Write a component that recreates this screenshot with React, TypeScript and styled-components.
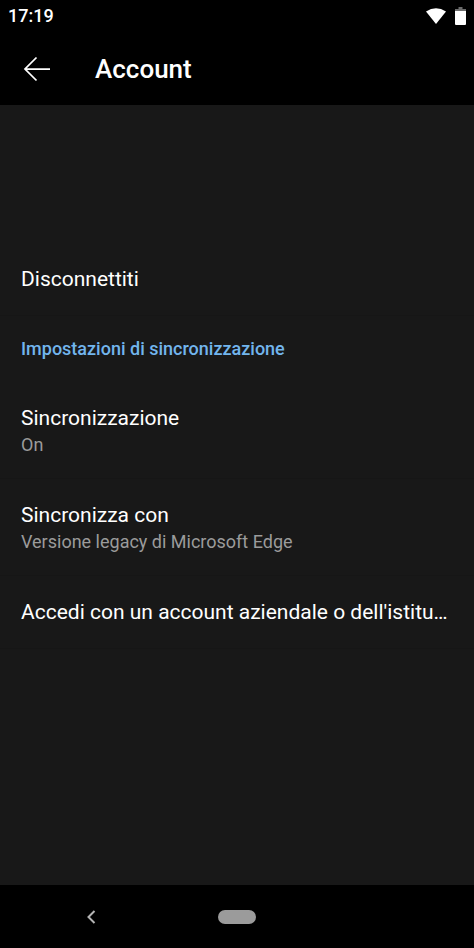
import React from "react";
import styled, { createGlobalStyle } from "styled-components";

const GlobalStyle = createGlobalStyle`
  *, *::before, *::after { box-sizing: border-box; }
  body { margin: 0; background: #181818; font-family: Roboto, sans-serif; color: #fff; }
  button { font: inherit; color: inherit; background: none; border: 0; padding: 0; cursor: pointer; }
`;

const Screen = styled.div`
  min-height: 100vh;
  display: flex;
  flex-direction: column;
  background: #181818;
`;

const StatusBar = styled.div`
  height: 32px;
  flex: none;
  display: flex;
  align-items: center;
  justify-content: space-between;
  padding: 0 8px;
  background: #000;
  font-size: 18px;
  line-height: 20px;
  font-weight: 500;
`;

const StatusIcons = styled.div`
  display: flex;
  align-items: center;
  gap: 9px;
`;

const AppBar = styled.header`
  height: 73px;
  flex: none;
  display: flex;
  align-items: center;
  gap: 44px;
  padding: 0 23px;
  background: #000;
`;

const IconButton = styled.button`
  display: flex;
  align-items: center;
  justify-content: center;
`;

const Title = styled.h1`
  margin: 0;
  font-size: 26px;
  line-height: 32px;
  font-weight: 500;
`;

const Content = styled.main`
  flex: 1;
  display: flex;
  flex-direction: column;
  padding-top: 138px;
`;

const Row = styled.button<{ $tall?: boolean }>`
  width: 100%;
  min-height: ${(p) => (p.$tall ? 97 : 73)}px;
  display: flex;
  flex-direction: column;
  justify-content: center;
  padding: ${(p) => (p.$tall ? 2 : 0)}px 21px 0;
  text-align: left;
  border-bottom: 1px solid #161616;
`;

const RowTitle = styled.span`
  max-width: 100%;
  overflow: hidden;
  white-space: nowrap;
  text-overflow: ellipsis;
  font-size: 21px;
  line-height: 28px;
`;

const RowValue = styled.span`
  font-size: 18px;
  line-height: 26px;
  color: #9b9b9b;
`;

const SectionTitle = styled.h2`
  margin: 0;
  padding: 21px;
  font-size: 18px;
  line-height: 24px;
  font-weight: 500;
  color: #72b5ed;
`;

const NavBar = styled.nav`
  height: 63px;
  flex: none;
  display: grid;
  grid-template-columns: 1fr auto 1fr;
  align-items: center;
  background: #000;
`;

const BackSlot = styled.div`
  display: flex;
  justify-content: center;
  padding-right: 36px;
`;

const HomePill = styled.button`
  width: 38px;
  height: 14px;
  && { background: #9b9b9b; }
  border-radius: 7px;
`;

export default function App() {
  return (
    <>
      <GlobalStyle />
      <Screen>
        <StatusBar>
          <time>17:19</time>
          <StatusIcons>
            <svg width="20" height="16" viewBox="0 0 20 16" aria-hidden="true">
              <path d="M0 3.500Q10-3 20 3.500L10 16Z" fill="#fff" />
            </svg>
            <svg width="11" height="18" viewBox="0 0 11 18" aria-hidden="true">
              <path d="M3.500 0h4v2H11v3H0V2h3.500Z" fill="#6b6b6b" />
              <path d="M0 4h11v13q0 1-1 1H1q-1 0-1-1Z" fill="#fff" />
            </svg>
          </StatusIcons>
        </StatusBar>
        <AppBar>
          <IconButton aria-label="Indietro">
            <svg width="28" height="26" viewBox="0 0 28 26" fill="none" stroke="#fff" strokeWidth="1.750">
              <path d="M27 13H2M13.500 1.500L2 13l11.500 11.500" />
            </svg>
          </IconButton>
          <Title>Account</Title>
        </AppBar>
        <Content>
          <Row><RowTitle>Disconnettiti</RowTitle></Row>
          <SectionTitle>Impostazioni di sincronizzazione</SectionTitle>
          <Row $tall>
            <RowTitle>Sincronizzazione</RowTitle>
            <RowValue>On</RowValue>
          </Row>
          <Row $tall>
            <RowTitle>Sincronizza con</RowTitle>
            <RowValue>Versione legacy di Microsoft Edge</RowValue>
          </Row>
          <Row><RowTitle>Accedi con un account aziendale o dell'istituto di istruzione</RowTitle></Row>
        </Content>
        <NavBar>
          <BackSlot>
            <IconButton aria-label="Torna indietro">
              <svg width="9" height="14" viewBox="0 0 9 14" fill="none" stroke="#b4b4b4" strokeWidth="2">
                <path d="M7.500 1L1.500 7l6 6" />
              </svg>
            </IconButton>
          </BackSlot>
          <HomePill aria-label="Home" />
        </NavBar>
      </Screen>
    </>
  );
}
